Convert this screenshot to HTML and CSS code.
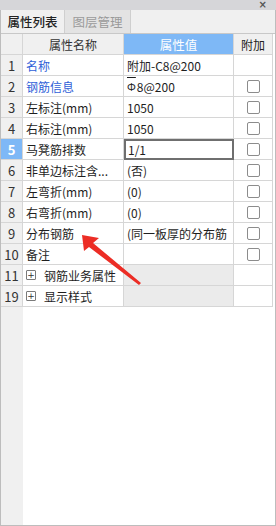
FILE: index.html
```html
<!DOCTYPE html>
<html lang="zh">
<head>
<meta charset="utf-8">
<link rel="stylesheet" href="styles.css">
</head>
<body>
<div class="panel">
  <div class="titlebar"><span class="close">×</span></div>
  <div class="tabs">
    <div class="tab active">属性列表</div>
    <div class="tab">图层管理</div>
  </div>
  <div class="grid">
    <div class="row head">
      <div class="c num"></div>
      <div class="c name center">属性名称</div>
      <div class="c val center blue">属性值</div>
      <div class="c ext center">附加</div>
    </div>
    <div class="row">
      <div class="c num">1</div>
      <div class="c name link">名称</div>
      <div class="c val">附加-C8@200</div>
      <div class="c ext"></div>
    </div>
    <div class="row">
      <div class="c num">2</div>
      <div class="c name link">钢筋信息</div>
      <div class="c val"><span class="bar">Φ</span>8@200</div>
      <div class="c ext"><span class="cb"></span></div>
    </div>
    <div class="row">
      <div class="c num">3</div>
      <div class="c name">左标注(mm)</div>
      <div class="c val">1050</div>
      <div class="c ext"><span class="cb"></span></div>
    </div>
    <div class="row">
      <div class="c num">4</div>
      <div class="c name">右标注(mm)</div>
      <div class="c val">1050</div>
      <div class="c ext"><span class="cb"></span></div>
    </div>
    <div class="row">
      <div class="c num sel">5</div>
      <div class="c name">马凳筋排数</div>
      <div class="c val edit">1/1</div>
      <div class="c ext"><span class="cb"></span></div>
    </div>
    <div class="row">
      <div class="c num">6</div>
      <div class="c name">非单边标注含...</div>
      <div class="c val">(否)</div>
      <div class="c ext"><span class="cb"></span></div>
    </div>
    <div class="row">
      <div class="c num">7</div>
      <div class="c name">左弯折(mm)</div>
      <div class="c val">(0)</div>
      <div class="c ext"><span class="cb"></span></div>
    </div>
    <div class="row">
      <div class="c num">8</div>
      <div class="c name">右弯折(mm)</div>
      <div class="c val">(0)</div>
      <div class="c ext"><span class="cb"></span></div>
    </div>
    <div class="row">
      <div class="c num">9</div>
      <div class="c name">分布钢筋</div>
      <div class="c val clip">(同一板厚的分布筋</div>
      <div class="c ext"><span class="cb"></span></div>
    </div>
    <div class="row">
      <div class="c num">10</div>
      <div class="c name">备注</div>
      <div class="c val"></div>
      <div class="c ext"><span class="cb"></span></div>
    </div>
    <div class="row">
      <div class="c num">11</div>
      <div class="c name"><span class="plus">+</span>钢筋业务属性</div>
      <div class="c val group"></div>
      <div class="c ext"></div>
    </div>
    <div class="row">
      <div class="c num">19</div>
      <div class="c name"><span class="plus">+</span>显示样式</div>
      <div class="c val group"></div>
      <div class="c ext"></div>
    </div>
    <div class="filler">
      <div class="fnum"></div>
      <div class="frest"></div>
    </div>
  </div>
  <svg class="arrow" width="276" height="526" viewBox="0 0 276 526">
    <polygon points="82,235 99,238 93,243 141,283 139,285 89,247 84,251" fill="#ec2d25"/>
  </svg>
</div>
</body>
</html>
```

FILE: styles.css
```css
* { box-sizing: border-box; }
html, body { margin: 0; padding: 0; }
body {
  width: 276px;
  height: 526px;
  font-family: "Noto Sans CJK SC", "Noto Sans", sans-serif;
  font-size: 12px;
  color: #1e1e1e;
  background: #fff;
}
.panel {
  position: relative;
  width: 276px;
  height: 526px;
  border: 1px solid #bdbdbd;
  border-top: none;
  display: flex;
  flex-direction: column;
  background: #fff;
}
.titlebar {
  height: 10px;
  background: #d6d6d9;
  display: flex;
  justify-content: flex-end;
  align-items: center;
  margin: 0 -1px;
  padding-right: 9px;
}
.close {
  font-family: "DejaVu Sans", sans-serif;
  font-size: 10px;
  line-height: 10px;
  color: #555;
  font-weight: bold;
}
.tabs {
  height: 24px;
  background: #f0f0f0;
  display: flex;
  border-bottom: 1px solid #c8c8c8;
}
.tab {
  display: flex;
  align-items: center;
  justify-content: center;
  font-size: 12.5px;
}
.tab.active {
  width: 63px;
  color: #222;
  font-weight: 500;
  background: #f0f0f0;
}
.tab:not(.active) {
  width: 67px;
  color: #9a9a9a;
  background: #e3e3e3;
  border-left: 1px solid #cfcfcf;
  border-right: 1px solid #cfcfcf;
}
.grid {
  flex: 1;
  display: flex;
  flex-direction: column;
}
.row {
  display: flex;
  height: 21px;
}
.c {
  height: 21px;
  border-right: 1px solid #d6d6d6;
  border-bottom: 1px solid #d6d6d6;
  display: flex;
  align-items: center;
  white-space: nowrap;
  overflow: hidden;
}
.num {
  width: 22px;
  background: #f0f0f0;
  justify-content: center;
  font-size: 13px;
  color: #333;
}
.name { width: 101px; padding-left: 3px; }
.val { width: 110px; padding-left: 3px; }
.ext { width: 39px; justify-content: center; }
.center { justify-content: center; padding-left: 0; }
.head .c { background: #f0f0f0; color: #333; }
.head .c.blue { background: #7eb8f6; color: #fff; font-size: 12.5px; }
.head .ext { color: #222; }
.link { color: #2f5fd8; }
.sel { background: #7eb8f6; color: #fff; font-weight: bold; }
.edit {
  border: 2px solid #6f6f6f;
  padding-left: 2px;
}
.group { background: #ebebeb; }
.bar {
  font-size: 11px;
  margin-right: 1px;
  text-decoration: overline;
}
.cb {
  width: 13px;
  height: 13px;
  border: 1px solid #8c8c8c;
  border-radius: 2px;
  background: #fff;
  margin-left: 1px;
}
.plus {
  width: 10px;
  height: 10px;
  border: 1px solid #7a7a7a;
  border-radius: 1px;
  display: inline-flex;
  align-items: center;
  justify-content: center;
  font-family: "DejaVu Sans", sans-serif;
  font-size: 9px;
  line-height: 8px;
  margin-right: 8px;
  color: #333;
}
.filler {
  flex: 1;
  display: flex;
}
.fnum { width: 22px; background: #f0f0f0; }
.frest { flex: 1; }
.arrow {
  position: absolute;
  left: -1px;
  top: 0;
  pointer-events: none;
}
```
